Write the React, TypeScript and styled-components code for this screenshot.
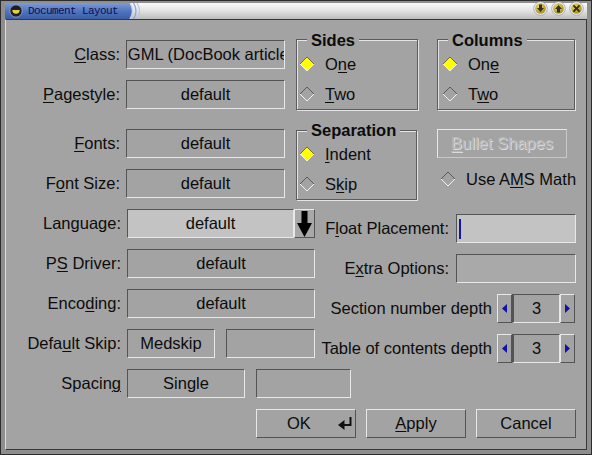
import React from 'react';
import styled, { createGlobalStyle } from 'styled-components';

const BG = '#a3a3a3';
const SHADE = '#545454';
const LIGHT = '#e8e8e8';
const FIELD_LIGHT = '#c3c3c3';

const GlobalStyle = createGlobalStyle`
  html, body { margin: 0; padding: 0; background: #8c8c8c; }
  * { box-sizing: border-box; }
`;

const Window = styled.div`
  width: 592px;
  height: 455px;
  display: flex;
  flex-direction: column;
  border: 1px solid #2c2c2c;
  padding: 2px 4px 4px 4px;
  background: #8e8e8e;
  font-family: "Liberation Sans", Arial, Helvetica, sans-serif;
  font-size: 16.5px;
  color: #0c0c0c;
`;

const TitleBar = styled.div`
  display: flex;
  height: 16px;
  flex-shrink: 0;
`;

const TitleActive = styled.div`
  display: flex;
  align-items: center;
  width: 124px;
  padding-left: 4px;
  gap: 5px;
  background: linear-gradient(#7d9ad6, #4d72bd 55%, #3b5ea8);
`;

const TitleText = styled.span`
  font-family: "Liberation Mono", "DejaVu Sans Mono", monospace;
  font-size: 11px;
  letter-spacing: -0.6px;
  color: #0e0e52;
  white-space: nowrap;
`;

const TitleRest = styled.div`
  flex: 1;
  display: flex;
  justify-content: flex-end;
  gap: 3px;
  padding-right: 3px;
  background: linear-gradient(#fafafa, #e2e2e2 50%, #bcbcbc);
`;

const TitleButton = styled.svg`
  margin-top: -2px;
  flex-shrink: 0;
`;

const Client = styled.main`
  flex: 1;
  display: flex;
  flex-direction: column;
  background: ${BG};
  border-top: 1px solid #383838;
  border-left: 1px solid #dcdcdc;
  border-right: 1px solid #383838;
  border-bottom: 1px solid #383838;
  padding-right: 10px;
`;

const TopSection = styled.div`
  display: flex;
  align-items: flex-start;
`;

const FormColumn = styled.div<{ $top: number; $width: number; $gap?: number }>`
  display: flex;
  flex-direction: column;
  gap: ${p => p.$gap ?? 0}px;
  width: ${p => p.$width}px;
  padding-top: ${p => p.$top}px;
  flex-shrink: 0;
`;

const SideColumn = styled.div<{ $left: number; $width: number }>`
  display: flex;
  flex-direction: column;
  margin-left: ${p => p.$left}px;
  width: ${p => p.$width}px;
  padding-top: 19px;
  flex-shrink: 0;
`;

const FormRow = styled.div<{ $mt?: number; $end?: boolean }>`
  display: flex;
  align-items: center;
  height: 29px;
  margin-top: ${p => p.$mt ?? 0}px;
  justify-content: ${p => (p.$end ? 'flex-end' : 'flex-start')};
  white-space: nowrap;
`;

const FieldLabel = styled.label<{ $width?: number; $gap: number }>`
  ${p => (p.$width ? `width: ${p.$width}px;` : '')}
  flex-shrink: 0;
  text-align: right;
  margin-right: ${p => p.$gap}px;
  white-space: nowrap;
`;

const Mn = styled.span`
  text-decoration: underline;
  text-decoration-thickness: 1px;
  text-underline-offset: 2px;
`;

const ComboBox = styled.div<{ $width: number; $light?: boolean; $ml?: number }>`
  width: ${p => p.$width}px;
  height: 29px;
  margin-left: ${p => p.$ml ?? 0}px;
  flex-shrink: 0;
  display: flex;
  align-items: center;
  justify-content: center;
  overflow: hidden;
  white-space: nowrap;
  background: ${p => (p.$light ? FIELD_LIGHT : BG)};
  border: 1px solid;
  border-color: ${SHADE} ${LIGHT} ${LIGHT} ${SHADE};
`;

const DropButton = styled.div`
  width: 21px;
  height: 29px;
  flex-shrink: 0;
  display: flex;
  align-items: center;
  justify-content: center;
  background: #a8a8a8;
  border: 1px solid;
  border-color: ${LIGHT} ${SHADE} ${SHADE} ${LIGHT};
`;

const LineEdit = styled.div<{ $light?: boolean }>`
  width: 120px;
  height: 29px;
  flex-shrink: 0;
  display: flex;
  align-items: center;
  padding-left: 2px;
  background: ${p => (p.$light ? FIELD_LIGHT : '#a9a9a9')};
  border: 1px solid;
  border-color: ${SHADE} ${LIGHT} ${LIGHT} ${SHADE};
`;

const Cursor = styled.span`
  width: 2px;
  height: 20px;
  background: #1414a8;
`;

const GroupBox = styled.div<{ $width: number; $mt?: number; $pt?: number }>`
  width: ${p => p.$width}px;
  margin-top: ${p => p.$mt ?? 0}px;
  padding-top: ${p => p.$pt ?? 0}px;
  display: flex;
  flex-direction: column;
  border: 1px solid #5c5c5c;
  box-shadow: inset 1px 1px 0 #e4e4e4, 1px 1px 0 #e4e4e4;
`;

const GroupTitle = styled.div`
  align-self: flex-start;
  margin: -10px 0 0 10px;
  padding: 0 4px;
  line-height: 18px;
  font-weight: bold;
  background: ${BG};
`;

const RadioRow = styled.div<{ $pl: number; $height?: number; $mt?: number }>`
  display: flex;
  align-items: center;
  gap: 10px;
  height: ${p => p.$height ?? 30}px;
  margin-top: ${p => p.$mt ?? 0}px;
  padding-left: ${p => p.$pl}px;
  white-space: nowrap;
`;

const PushButton = styled.button<{ $width: number; $pl?: number; $disabledLook?: boolean }>`
  width: ${p => p.$width}px;
  height: 29px;
  flex-shrink: 0;
  display: flex;
  align-items: center;
  justify-content: ${p => (p.$pl ? 'flex-start' : 'center')};
  padding: 0 0 0 ${p => p.$pl ?? 0}px;
  gap: 27px;
  font: inherit;
  color: ${p => (p.$disabledLook ? '#b6b6b6' : 'inherit')};
  text-shadow: ${p => (p.$disabledLook ? '1px 1px 0 #dcdcdc' : 'none')};
  background: ${BG};
  border: 1px solid;
  border-color: ${p => (p.$disabledLook ? `${LIGHT} #c8c8c8 #c8c8c8 ${LIGHT}` : `${LIGHT} ${SHADE} ${SHADE} ${LIGHT}`)};
  white-space: nowrap;
`;

const LowerSection = styled.div`
  display: flex;
  align-items: flex-start;
`;

const RightForm = styled.div`
  flex: 1;
  display: flex;
  flex-direction: column;
  align-items: flex-end;
  gap: 11px;
  padding-top: 14px;
`;

const Spin = styled.div`
  display: flex;
  height: 29px;
  margin-right: 1px;
`;

const SpinArrow = styled.div`
  width: 15px;
  display: flex;
  align-items: center;
  justify-content: center;
  background: ${BG};
  border: 1px solid;
  border-color: ${LIGHT} ${SHADE} ${SHADE} ${LIGHT};
`;

const SpinValue = styled.div`
  width: 48px;
  display: flex;
  align-items: center;
  justify-content: center;
  border: 1px solid;
  border-left-width: 2px;
  border-color: ${SHADE} ${LIGHT} ${LIGHT} ${SHADE};
`;

const ButtonRow = styled.div`
  display: flex;
  justify-content: flex-end;
  gap: 10px;
  margin-top: 11px;
`;

const Diamond = ({ checked }: { checked?: boolean }) => (
  <svg width="16" height="16" viewBox="0 0 16 16" style={{ flexShrink: 0 }}>
    <polygon points="8,1 15,8 8,15 1,8" fill={checked ? '#ffff00' : 'none'} />
    <polyline points="1,8 8,1 15,8" fill="none" stroke={checked ? '#6e6e3c' : '#5a5a5a'} strokeWidth="1" />
    <polyline points="1,8 8,15 15,8" fill="none" stroke="#f2f2f2" strokeWidth="1" />
  </svg>
);

const DownArrow = () => (
  <svg width="15" height="26" viewBox="0 0 15 26">
    <rect x="4.5" y="0" width="6" height="13" fill="#000" />
    <polygon points="0,12 15,12 7.5,26" fill="#000" />
  </svg>
);

const SpinTri = ({ dir }: { dir: 'left' | 'right' }) => (
  <svg width="5" height="9" viewBox="0 0 5 9">
    <polygon points={dir === 'left' ? '5,0 5,9 0,4.5' : '0,0 0,9 5,4.5'} fill="#1212a0" />
  </svg>
);

const EnterIcon = () => (
  <svg width="15" height="13" viewBox="0 0 15 13">
    <polygon points="0,8 6.5,3 6.5,13" fill="#111" />
    <rect x="5.5" y="7" width="7.5" height="2" fill="#111" />
    <rect x="11.5" y="0" width="2" height="9" fill="#111" />
  </svg>
);

const MenuIcon = () => (
  <svg width="14" height="14" viewBox="0 0 14 14">
    <circle cx="7" cy="7" r="6.2" fill="#1e1e2a" stroke="#9aa8cc" strokeWidth="0.9" />
    <path d="M3.3 6 A3.7 3.7 0 0 0 10.7 6 Z" fill="#e6cf3c" />
  </svg>
);

const Wave = () => (
  <svg width="14" height="16" viewBox="0 0 14 16" style={{ flexShrink: 0 }}>
    <defs>
      <linearGradient id="wb" x1="0" y1="0" x2="0" y2="1">
        <stop offset="0" stopColor="#7d9ad6" />
        <stop offset="0.55" stopColor="#4d72bd" />
        <stop offset="1" stopColor="#3b5ea8" />
      </linearGradient>
      <linearGradient id="wg" x1="0" y1="0" x2="0" y2="1">
        <stop offset="0" stopColor="#fafafa" />
        <stop offset="0.5" stopColor="#e2e2e2" />
        <stop offset="1" stopColor="#bcbcbc" />
      </linearGradient>
    </defs>
    <rect x="0" y="0" width="14" height="16" fill="url(#wg)" />
    <path d="M0 0 H1 Q6 8 1 16 H0 Z" fill="url(#wb)" />
    <path d="M1 0 Q6 8 1 16" fill="none" stroke="#c9d5ee" strokeWidth="1.3" />
    <path d="M4.5 0 Q9.5 8 4.5 16" fill="none" stroke="#8ea6d2" strokeWidth="1.3" />
    <path d="M8 0 Q13 8 8 16" fill="none" stroke="#b4c2de" strokeWidth="1.1" />
  </svg>
);

const WinButton = ({ kind }: { kind: 'min' | 'max' | 'close' }) => (
  <TitleButton width="15" height="15" viewBox="0 0 15 15">
    <defs>
      <radialGradient id={`g-${kind}`} cx="0.4" cy="0.35" r="0.7">
        <stop offset="0" stopColor="#f0dc70" />
        <stop offset="1" stopColor="#a48a22" />
      </radialGradient>
    </defs>
    <circle cx="7.5" cy="7.5" r="6.8" fill="#efefef" stroke="#8c8c8c" strokeWidth="0.6" />
    <circle cx="7.5" cy="7.5" r="5.3" fill={`url(#g-${kind})`} />
    {kind === 'min' && (
      <g fill="#34301a">
        <rect x="6" y="3.5" width="3" height="4" />
        <polygon points="4,7 11,7 7.5,11" />
      </g>
    )}
    {kind === 'max' && (
      <g fill="#34301a">
        <rect x="6" y="7.5" width="3" height="4" />
        <polygon points="4,8 11,8 7.5,4" />
      </g>
    )}
    {kind === 'close' && (
      <g stroke="#34301a" strokeWidth="1.8" strokeLinecap="round">
        <line x1="5" y1="5" x2="10" y2="10" />
        <line x1="10" y1="5" x2="5" y2="10" />
      </g>
    )}
  </TitleButton>
);

export default function App() {
  return (
    <>
      <GlobalStyle />
      <Window>
        <TitleBar>
          <TitleActive>
            <MenuIcon />
            <TitleText>Document Layout</TitleText>
          </TitleActive>
          <Wave />
          <TitleRest>
            <WinButton kind="min" />
            <WinButton kind="max" />
            <WinButton kind="close" />
          </TitleRest>
        </TitleBar>
        <Client>
          <TopSection>
            <FormColumn $top={20} $width={279}>
              <FormRow>
                <FieldLabel $width={114} $gap={6}><Mn>C</Mn>lass:</FieldLabel>
                <ComboBox $width={159}>SGML (DocBook article)</ComboBox>
              </FormRow>
              <FormRow $mt={11}>
                <FieldLabel $width={114} $gap={6}><Mn>P</Mn>agestyle:</FieldLabel>
                <ComboBox $width={159}>default</ComboBox>
              </FormRow>
              <FormRow $mt={20}>
                <FieldLabel $width={114} $gap={6}><Mn>F</Mn>onts:</FieldLabel>
                <ComboBox $width={159}>default</ComboBox>
              </FormRow>
              <FormRow $mt={11}>
                <FieldLabel $width={114} $gap={6}>F<Mn>o</Mn>nt Size:</FieldLabel>
                <ComboBox $width={159}>default</ComboBox>
              </FormRow>
            </FormColumn>

            <SideColumn $left={11} $width={122}>
              <GroupBox $width={122} $pt={1}>
                <GroupTitle>Sides</GroupTitle>
                <RadioRow $pl={2}><Diamond checked /><span>O<Mn>n</Mn>e</span></RadioRow>
                <RadioRow $pl={2}><Diamond /><span><Mn>T</Mn>wo</span></RadioRow>
              </GroupBox>
              <GroupBox $width={121} $mt={20}>
                <GroupTitle>Separation</GroupTitle>
                <RadioRow $pl={2}><Diamond checked /><span><Mn>I</Mn>ndent</span></RadioRow>
                <RadioRow $pl={2}><Diamond /><span>S<Mn>k</Mn>ip</span></RadioRow>
              </GroupBox>
            </SideColumn>

            <SideColumn $left={19} $width={139}>
              <GroupBox $width={138} $pt={1}>
                <GroupTitle>Columns</GroupTitle>
                <RadioRow $pl={4}><Diamond checked /><span>On<Mn>e</Mn></span></RadioRow>
                <RadioRow $pl={4}><Diamond /><span>T<Mn>w</Mn>o</span></RadioRow>
              </GroupBox>
              <FormRow $mt={19}>
                <PushButton $width={130} $disabledLook disabled>
                  <span><Mn>B</Mn>ullet Shapes</span>
                </PushButton>
              </FormRow>
              <RadioRow $pl={3} $height={30} $mt={6}>
                <Diamond />
                <span>Use A<Mn>M</Mn>S Math</span>
              </RadioRow>
            </SideColumn>
          </TopSection>

          <LowerSection>
            <FormColumn $top={9} $width={309} $gap={11}>
              <FormRow>
                <FieldLabel $width={115} $gap={6}>Language:</FieldLabel>
                <ComboBox $width={167} $light>default</ComboBox>
                <DropButton><DownArrow /></DropButton>
              </FormRow>
              <FormRow>
                <FieldLabel $width={115} $gap={6}>P<Mn>S</Mn> Driver:</FieldLabel>
                <ComboBox $width={188}>default</ComboBox>
              </FormRow>
              <FormRow>
                <FieldLabel $width={115} $gap={6}>Enco<Mn>d</Mn>ing:</FieldLabel>
                <ComboBox $width={188}>default</ComboBox>
              </FormRow>
              <FormRow>
                <FieldLabel $width={115} $gap={6}>Defa<Mn>u</Mn>lt Skip:</FieldLabel>
                <ComboBox $width={88}>Medskip</ComboBox>
                <ComboBox $width={89} $ml={11} />
              </FormRow>
              <FormRow>
                <FieldLabel $width={115} $gap={6}>Spacin<Mn>g</Mn></FieldLabel>
                <ComboBox $width={118}>Single</ComboBox>
                <ComboBox $width={95} $ml={11} />
              </FormRow>
            </FormColumn>

            <RightForm>
              <FormRow $end>
                <FieldLabel $gap={7}>F<Mn>l</Mn>oat Placement:</FieldLabel>
                <LineEdit $light><Cursor /></LineEdit>
              </FormRow>
              <FormRow $end>
                <FieldLabel $gap={7}>E<Mn>x</Mn>tra Options:</FieldLabel>
                <LineEdit />
              </FormRow>
              <FormRow $end>
                <FieldLabel $gap={5}>Section number depth</FieldLabel>
                <Spin>
                  <SpinArrow><SpinTri dir="left" /></SpinArrow>
                  <SpinValue>3</SpinValue>
                  <SpinArrow><SpinTri dir="right" /></SpinArrow>
                </Spin>
              </FormRow>
              <FormRow $end>
                <FieldLabel $gap={5}>Table of contents depth</FieldLabel>
                <Spin>
                  <SpinArrow><SpinTri dir="left" /></SpinArrow>
                  <SpinValue>3</SpinValue>
                  <SpinArrow><SpinTri dir="right" /></SpinArrow>
                </Spin>
              </FormRow>
            </RightForm>
          </LowerSection>

          <ButtonRow>
            <PushButton $width={100} $pl={30}>
              <span>OK</span>
              <EnterIcon />
            </PushButton>
            <PushButton $width={100}><span><Mn>A</Mn>pply</span></PushButton>
            <PushButton $width={100}><span>Cancel</span></PushButton>
          </ButtonRow>
        </Client>
      </Window>
    </>
  );
}
